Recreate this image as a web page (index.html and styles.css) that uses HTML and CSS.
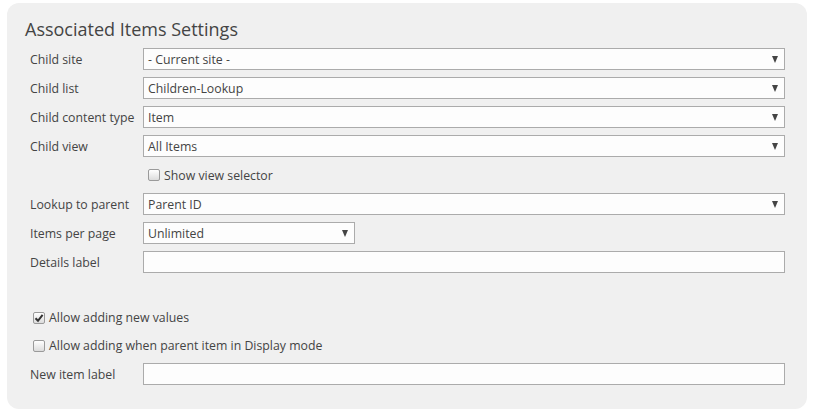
FILE: index.html
```html
<!DOCTYPE html>
<html>
<head>
<meta charset="utf-8">
<link rel="stylesheet" href="styles.css">
</head>
<body>
<div class="panel">
  <h2 class="title">Associated Items Settings</h2>
  <div class="form">
    <div class="label">Child site</div>
    <div class="select"><span>- Current site -</span><i class="arrow"></i></div>

    <div class="label">Child list</div>
    <div class="select"><span>Children-Lookup</span><i class="arrow"></i></div>

    <div class="label">Child content type</div>
    <div class="select"><span>Item</span><i class="arrow"></i></div>

    <div class="label">Child view</div>
    <div class="select"><span>All Items</span><i class="arrow"></i></div>

    <div class="label"></div>
    <div class="check sub"><span class="box"></span><span>Show view selector</span></div>

    <div class="label">Lookup to parent</div>
    <div class="select"><span>Parent ID</span><i class="arrow"></i></div>

    <div class="label">Items per page</div>
    <div class="select short"><span>Unlimited</span><i class="arrow"></i></div>

    <div class="label">Details label</div>
    <div class="input"></div>

    <div class="spacer"></div>

    <div class="check full"><span class="box checked"><svg viewBox="0 0 10 10" width="10" height="10"><path d="M1.5 5.2 L4 7.8 L8.6 1.8" fill="none" stroke="#333" stroke-width="2"/></svg></span><span>Allow adding new values</span></div>

    <div class="check full"><span class="box"></span><span>Allow adding when parent item in Display mode</span></div>

    <div class="label">New item label</div>
    <div class="input"></div>
  </div>
</div>
</body>
</html>
```
FILE: styles.css
```css
html, body {
  margin: 0;
  padding: 0;
  background: #ffffff;
}
body {
  font-family: "Open Sans", "Noto Sans", sans-serif;
  color: #444444;
}
.panel {
  margin: 3px 7px 0 7px;
  width: 800px;
  box-sizing: border-box;
  background: #f0f0f0;
  border-radius: 12px;
  padding: 13px 22px 24px 18px;
}
.title {
  margin: 0 0 5px 0;
  font-weight: normal;
  font-size: 18px;
  line-height: 27px;
  color: #444;
}
.form {
  display: grid;
  grid-template-columns: 113px 1fr;
  row-gap: 7px;
  padding-left: 5px;
}
.label {
  font-size: 12.3px;
  line-height: 22px;
  height: 22px;
  padding-top: 1px;
  box-sizing: border-box;
  white-space: nowrap;
}
.select, .input {
  height: 22px;
  box-sizing: border-box;
  border: 1px solid #ababab;
  background: #fdfdfd;
  display: flex;
  align-items: center;
  justify-content: space-between;
  padding: 1px 6px 0 4px;
  font-size: 12.3px;
}
.select.short {
  width: 212px;
}
.arrow {
  width: 0;
  height: 0;
  border-left: 3.5px solid transparent;
  border-right: 3.5px solid transparent;
  border-top: 7px solid #444;
}
.check {
  display: flex;
  align-items: center;
  height: 22px;
  font-size: 12.3px;
  gap: 4px;
}
.check.sub {
  padding-left: 5px;
}
.check.full {
  grid-column: 1 / span 2;
  padding-left: 3px;
  height: 21px;
}
.spacer {
  grid-column: 1 / span 2;
  height: 20px;
}
.box {
  width: 12px;
  height: 12px;
  box-sizing: border-box;
  border: 1px solid #9a9a9a;
  border-radius: 2px;
  background: linear-gradient(#ffffff, #dcdcdc);
  display: inline-flex;
  align-items: center;
  justify-content: center;
}
.box svg {
  display: block;
}
```
